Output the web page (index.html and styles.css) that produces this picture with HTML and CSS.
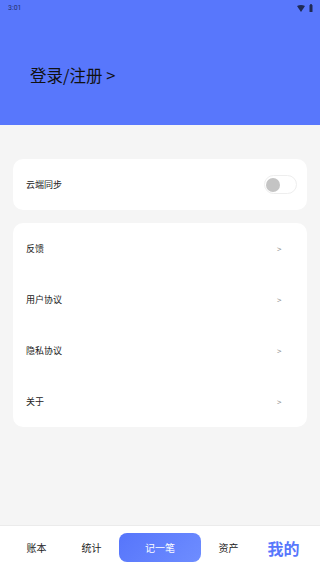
FILE: index.html
```html
<!DOCTYPE html>
<html lang="zh">
<head>
  <meta charset="UTF-8">
  <meta name="viewport" content="width=device-width, initial-scale=1.0">
  <title>我的</title>
  <link rel="stylesheet" href="styles.css">
</head>
<body>
  <div class="app">
    <header class="header">
      <div class="status-bar">
        <span class="time">3:01</span>
        <span class="status-icons">
          <svg width="8" height="7" viewBox="0 0 8 7"><path d="M0 1 Q4 -1 8 1 L4 7 Z" fill="#1f2a55"/></svg>
          <svg width="4" height="8" viewBox="0 0 4 8"><rect x="0.5" y="1" width="3" height="7" rx="0.5" fill="#1f2a55"/><rect x="1.2" y="0" width="1.6" height="1" fill="#1f2a55"/></svg>
        </span>
      </div>
      <div class="login">登录/注册 &gt;</div>
    </header>

    <main class="content">
      <div class="card">
        <div class="row">
          <span>云端同步</span>
          <span class="switch"><span class="knob"></span></span>
        </div>
      </div>

      <div class="card">
        <div class="row"><span>反馈</span><span class="arrow">&gt;</span></div>
        <div class="row"><span>用户协议</span><span class="arrow">&gt;</span></div>
        <div class="row"><span>隐私协议</span><span class="arrow">&gt;</span></div>
        <div class="row"><span>关于</span><span class="arrow">&gt;</span></div>
      </div>
    </main>

    <nav class="tabbar">
      <div class="tab">账本</div>
      <div class="tab">统计</div>
      <div class="tab-add">记一笔</div>
      <div class="tab">资产</div>
      <div class="tab active">我的</div>
    </nav>
  </div>
</body>
</html>
```

FILE: styles.css
```css
* {
  box-sizing: border-box;
}
body {
  margin: 0;
  font-family: "Noto Sans CJK SC", "Noto Sans", sans-serif;
  background: #f5f5f5;
  color: #222;
}
.app {
  width: 320px;
  height: 569px;
  display: flex;
  flex-direction: column;
  overflow: hidden;
}
.header {
  height: 125px;
  background: #5877fc;
  display: flex;
  flex-direction: column;
}
.status-bar {
  height: 14px;
  padding: 2px 7px 0 8px;
  display: flex;
  justify-content: space-between;
  align-items: center;
}
.time {
  font-family: Roboto, sans-serif;
  font-size: 7px;
  color: #26306a;
}
.status-icons {
  display: flex;
  gap: 4px;
  align-items: center;
}
.login {
  margin-top: 49px;
  padding-left: 30px;
  font-size: 16.5px;
  line-height: 24px;
  color: #111;
}
.content {
  flex: 1;
  padding: 34px 13px 0;
  display: flex;
  flex-direction: column;
  gap: 13px;
}
.card {
  background: #fff;
  border-radius: 10px;
}
.row {
  height: 51px;
  padding: 0 10px 0 13px;
  display: flex;
  justify-content: space-between;
  align-items: center;
  font-size: 9px;
  color: #222;
}
.arrow {
  width: 20px;
  font-size: 8px;
  color: #888;
}
.switch {
  width: 33px;
  height: 19px;
  border: 1px solid #eee;
  border-radius: 10px;
  background: #fff;
  display: flex;
  align-items: center;
  padding-left: 1px;
}
.knob {
  width: 14px;
  height: 14px;
  border-radius: 50%;
  background: #c4c4c4;
}
.tabbar {
  height: 44px;
  background: #fff;
  border-top: 1px solid #ebebeb;
  padding: 0 9px;
  display: flex;
  align-items: center;
}
.tab {
  flex: 1;
  text-align: center;
  font-size: 10px;
  color: #222;
}
.tab.active {
  font-size: 16px;
  font-weight: bold;
  color: #5877fc;
}
.tab-add {
  flex: 0 0 82px;
  height: 29px;
  border-radius: 8px;
  background: linear-gradient(135deg, #5675fb, #6e8dff);
  color: #fff;
  font-size: 10px;
  display: flex;
  justify-content: center;
  align-items: center;
}
```
